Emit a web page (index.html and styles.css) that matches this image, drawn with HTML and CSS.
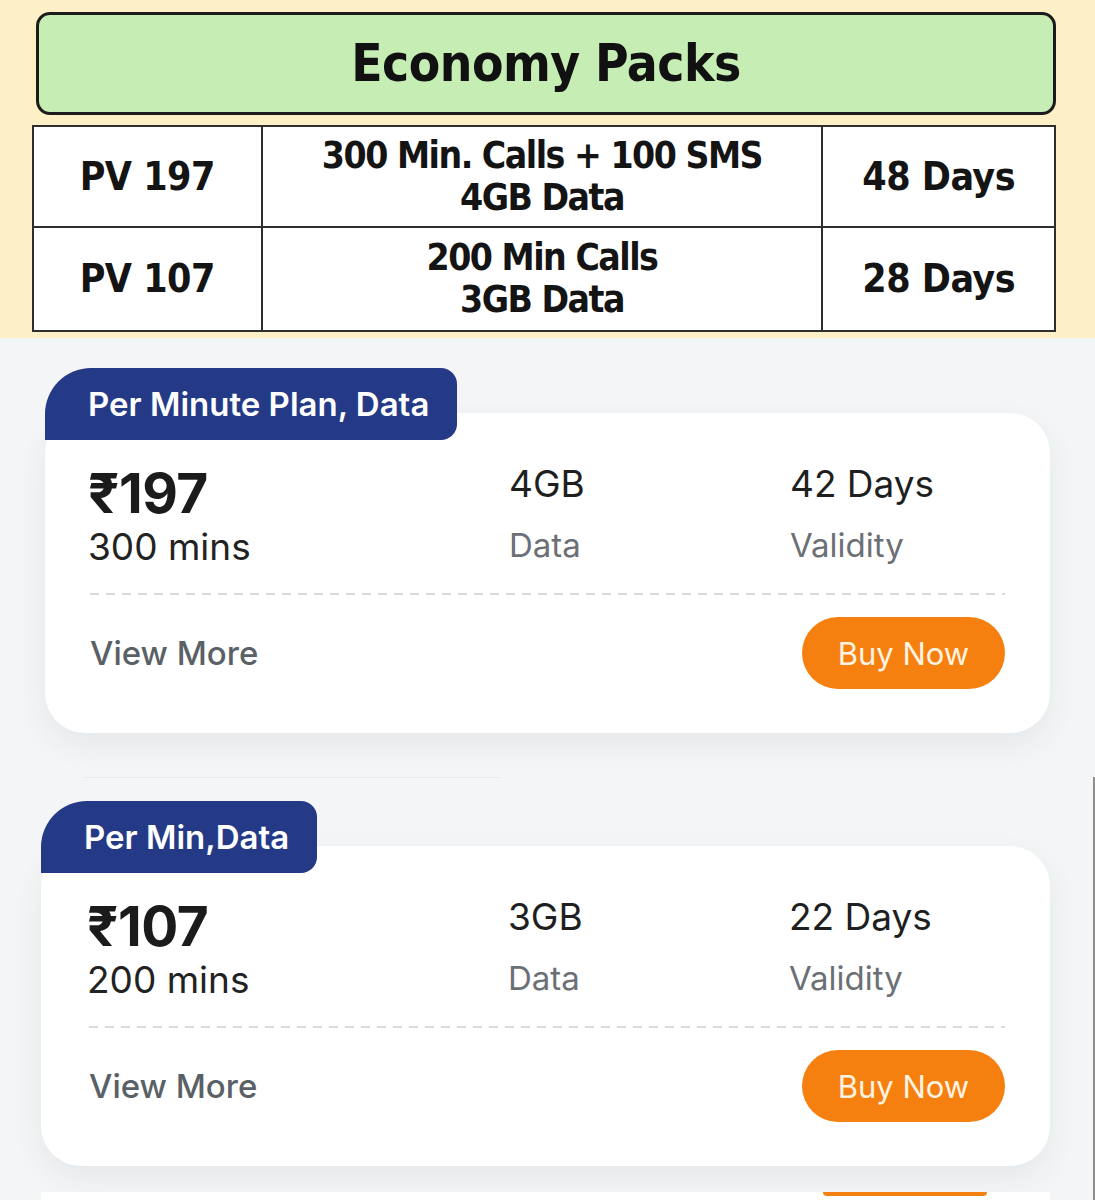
FILE: index.html
```html
<!DOCTYPE html>
<html lang="en">
<head>
    <meta charset="UTF-8">
    <meta name="viewport" content="width=device-width, initial-scale=1.0">
    <title>Economy Packs</title>
    <link rel="stylesheet" href="styles.css">
</head>
<body>
    <div class="economy">
        <div class="title-box">Economy Packs</div>
        <table class="pack-table">
            <tr class="row-one">
                <td class="col-name">PV 197</td>
                <td class="col-info">300 Min. Calls + 100 SMS<br>4GB Data</td>
                <td class="col-days">48 Days</td>
            </tr>
            <tr class="row-two">
                <td class="col-name">PV 107</td>
                <td class="col-info">200 Min Calls<br>3GB Data</td>
                <td class="col-days">28 Days</td>
            </tr>
        </table>
    </div>

    <div class="plans">
        <div class="plan">
            <div class="badge">Per Minute Plan, Data</div>
            <div class="card">
                <div class="card-top">
                    <div>
                        <div class="price">₹197</div>
                        <div class="mins">300 mins</div>
                    </div>
                    <div>
                        <div class="value">4GB</div>
                        <div class="label">Data</div>
                    </div>
                    <div>
                        <div class="value">42 Days</div>
                        <div class="label">Validity</div>
                    </div>
                </div>
                <div class="dashes"></div>
                <div class="card-bottom">
                    <span class="view-more">View More</span>
                    <button class="buy">Buy Now</button>
                </div>
            </div>
        </div>
    </div>

    <div class="plans plans-lower">
        <div class="seam"></div>
        <div class="plan plan-two">
            <div class="badge">Per Min,Data</div>
            <div class="card">
                <div class="card-top">
                    <div>
                        <div class="price">₹107</div>
                        <div class="mins">200 mins</div>
                    </div>
                    <div>
                        <div class="value">3GB</div>
                        <div class="label">Data</div>
                    </div>
                    <div>
                        <div class="value">22 Days</div>
                        <div class="label">Validity</div>
                    </div>
                </div>
                <div class="dashes"></div>
                <div class="card-bottom">
                    <span class="view-more">View More</span>
                    <button class="buy">Buy Now</button>
                </div>
            </div>
        </div>
        <div class="next-card">
            <div class="next-bump"></div>
        </div>
    </div>
</body>
</html>
```

FILE: styles.css
```css
body {
    margin: 0;
    padding: 0;
    width: 1095px;
    height: 1200px;
    overflow: hidden;
    font-family: Inter, "Noto Sans", sans-serif;
    background: #f3f5f6;
}
.economy {
    background: #fdf0c6;
    height: 338px;
    padding: 12px 39px 0 32px;
    box-sizing: border-box;
}
.title-box {
    margin-left: 4px;
    height: 103px;
    box-sizing: border-box;
    background: #c6eeb4;
    border: 3px solid #1c1c1c;
    border-radius: 14px;
    display: flex;
    align-items: center;
    justify-content: center;
    font-family: "DejaVu Sans Condensed", "DejaVu Sans", sans-serif;
    font-stretch: condensed;
    font-weight: bold;
    font-size: 51px;
    letter-spacing: -0.5px;
    color: #111;
}
.pack-table {
    margin-top: 10px;
    width: 1024px;
    border-collapse: collapse;
    background: #fff;
    font-family: "DejaVu Sans Condensed", "DejaVu Sans", sans-serif;
    font-stretch: condensed;
    font-weight: bold;
    color: #141414;
    text-align: center;
}
.pack-table td {
    border: 2px solid #2e2e2e;
    padding: 0;
    font-size: 39px;
    line-height: 42px;
    letter-spacing: -0.5px;
}
.row-one td {
    height: 99px;
}
.row-two td {
    height: 102px;
}
.col-name {
    width: 227px;
}
.pack-table .col-info {
    width: 560px;
    font-size: 37px;
    letter-spacing: -1.5px;
}
.col-days {
    width: 231px;
}
.plans {
    padding: 30px 0 44px 45px;
    height: 439px;
    box-sizing: border-box;
}
.plan {
    width: 1005px;
}
.badge {
    position: relative;
    z-index: 1;
    display: inline-block;
    height: 72px;
    line-height: 72px;
    padding: 0 28px 0 43px;
    background: #253a86;
    color: #fff;
    font-size: 33px;
    font-weight: 600;
    border-radius: 46px 16px 16px 0;
}
.card {
    margin-top: -27px;
    background: #fff;
    border-radius: 40px;
    padding: 52px 45px 44px 43px;
    box-shadow: 0 12px 30px rgba(60, 70, 80, 0.07);
}
.card-top {
    display: grid;
    grid-template-columns: 421px 281px 1fr;
    height: 108px;
}
.price {
    font-size: 55px;
    font-weight: 700;
    line-height: 56px;
    color: #1b1b1b;
    letter-spacing: -0.5px;
}
.mins {
    font-size: 37px;
    line-height: 52px;
    color: #222;
}
.value {
    font-size: 37px;
    line-height: 44px;
    color: #1f1f1f;
    margin-top: -3px;
}
.label {
    font-size: 33px;
    line-height: 44px;
    margin-top: 17px;
    color: #6b7076;
}
.dashes {
    margin: 20px 0 22px 2px;
    height: 2px;
    background: repeating-linear-gradient(to right, #dadada 0 9px, transparent 9px 16px);
}
.card-bottom {
    display: flex;
    align-items: center;
    justify-content: space-between;
    height: 72px;
}
.view-more {
    margin-left: 2px;
    font-size: 33px;
    font-weight: 500;
    color: #5a6166;
}
.buy {
    width: 203px;
    height: 72px;
    border: none;
    border-radius: 36px;
    background: #f6800f;
    color: #fff3e2;
    font-family: Inter, "Noto Sans", sans-serif;
    font-size: 31px;
    cursor: pointer;
}
.plans-lower {
    padding: 0 0 0 41px;
    height: 423px;
    border-right: 2px solid #8e8e8e;
}
.seam {
    margin-left: 44px;
    width: 415px;
    height: 1px;
    background: #e3e9f1;
    margin-bottom: 23px;
}
.plan-two {
    width: 1009px;
}
.plan-two .card {
    padding-left: 46px;
}
.next-card {
    margin-top: 26px;
    width: 1009px;
    height: 20px;
    background: #fff;
    position: relative;
}
.next-bump {
    position: absolute;
    left: 782px;
    top: 0;
    width: 164px;
    height: 4px;
    background: #f6800f;
    border-radius: 0 0 20px 20px;
}
```
